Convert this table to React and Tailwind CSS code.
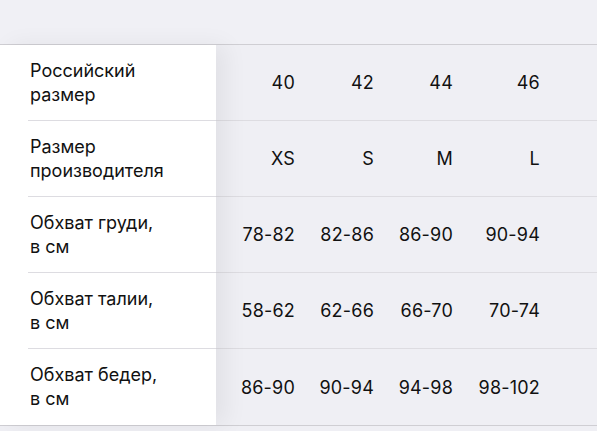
import React from "react";

const rows = [
  { label: ["Российский", "размер"], values: ["40", "42", "44", "46"] },
  { label: ["Размер", "производителя"], values: ["XS", "S", "M", "L"] },
  { label: ["Обхват груди,", "в см"], values: ["78-82", "82-86", "86-90", "90-94"] },
  { label: ["Обхват талии,", "в см"], values: ["58-62", "62-66", "66-70", "70-74"] },
  { label: ["Обхват бедер,", "в см"], values: ["86-90", "90-94", "94-98", "98-102"] },
];

const colWidths = ["w-[79px]", "w-[79px]", "w-[79px]", "w-[87px]"];

export default function App() {
  return (
    <div
      className="w-[597px] h-[431px] bg-[#efeff4] overflow-hidden text-[#111] text-[18px]"
      style={{ fontFamily: "Inter, 'Noto Sans', sans-serif" }}
    >
      {/* top band */}
      <div className="h-[45px] bg-[#f0f0f5] border-b border-[#cfced3]" />

      <div className="flex">
        {/* sticky label column */}
        <div className="w-[216px] bg-white relative z-10 shadow-[10px_0_22px_rgba(0,0,0,0.06)]">
          {rows.map((r, i) => (
            <div key={i} className="h-[76px] pl-[28px]">
              <div
                className={`h-full flex flex-col justify-center pl-[2px] leading-[24px] ${
                  i < rows.length - 1 ? "border-b border-[#dddce1]" : ""
                }`}
              >
                <span>{r.label[0]}</span>
                <span>{r.label[1]}</span>
              </div>
            </div>
          ))}
        </div>

        {/* values */}
        <div className="flex-1">
          {rows.map((r, i) => (
            <div
              key={i}
              className={`h-[76px] flex items-center ${
                i < rows.length - 1 ? "border-b border-[#dddce1]" : ""
              }`}
            >
              {r.values.map((v, j) => (
                <div key={j} className={`${colWidths[j]} text-right tracking-[0.2px]`}>
                  {v}
                </div>
              ))}
            </div>
          ))}
        </div>
      </div>

      <div className="h-px bg-[#cfced3]" />
    </div>
  );
}
